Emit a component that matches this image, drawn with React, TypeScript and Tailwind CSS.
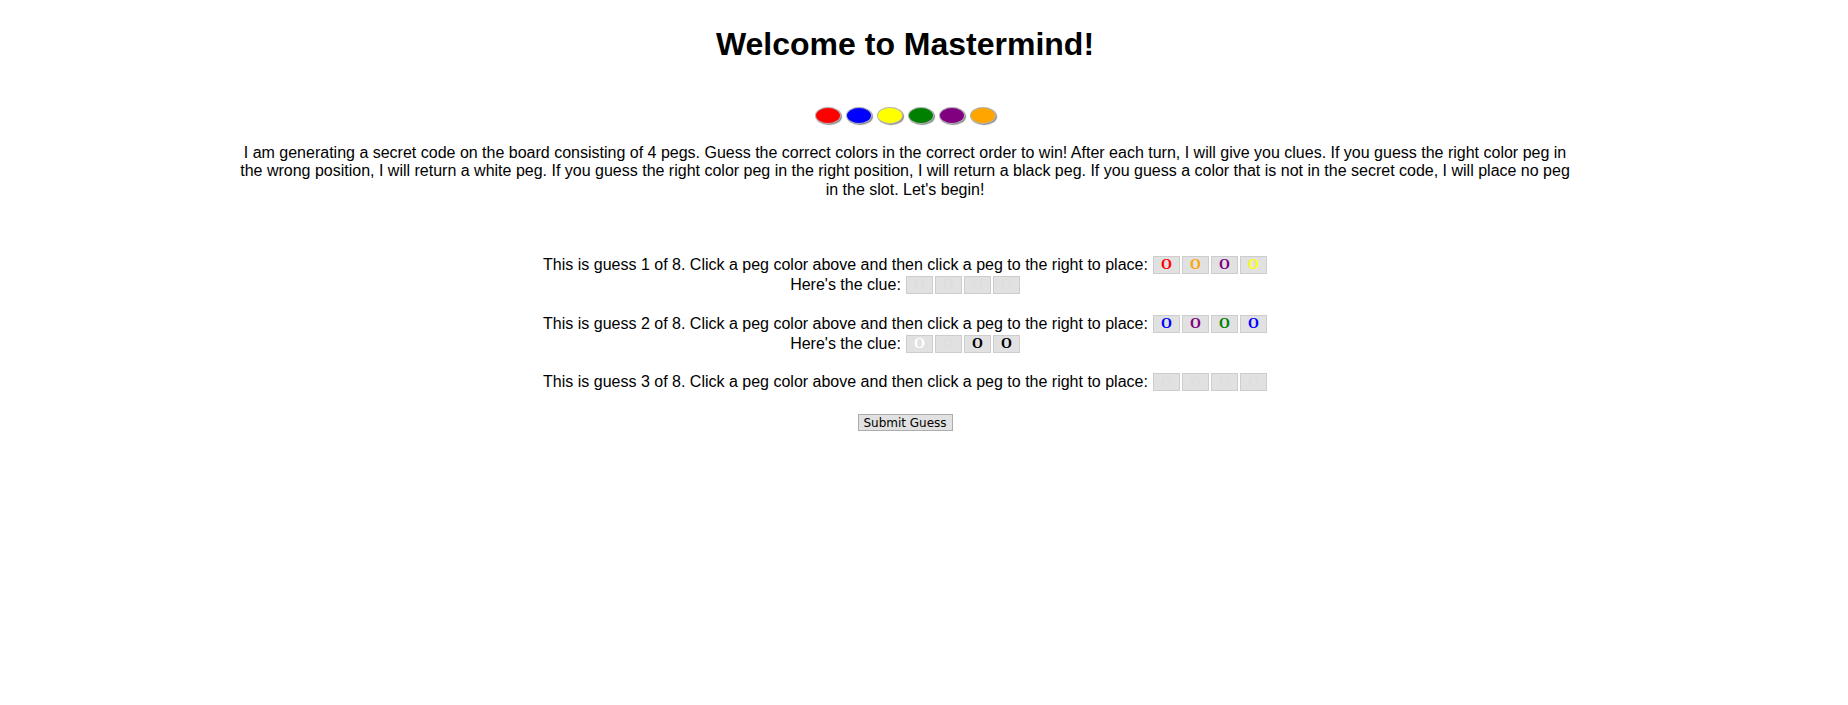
import React from "react";

const paletteColors = ["#ff0000", "#0000ff", "#ffff00", "#008000", "#800080", "#ffa500"];

function Slot({ color }: { color: string }) {
  return (
    <span
      className="flex h-[18px] w-[27px] items-center justify-center border border-[#cdcdcd] bg-[#e1e1e1] text-[14px] font-bold leading-none"
      style={{ color, fontFamily: '"Liberation Serif", serif' }}
    >
      O
    </span>
  );
}

function Slots({ colors }: { colors: string[] }) {
  return (
    <span className="ml-[5px] flex gap-[2px]">
      {colors.map((c, i) => (
        <Slot key={i} color={c} />
      ))}
    </span>
  );
}

const EMPTY = "#dedede";

export default function App() {
  return (
    <div
      className="w-[1810px] bg-white pb-[200px] text-center text-[16px] text-black"
      style={{ fontFamily: '"Liberation Sans", Arial, sans-serif' }}
    >
      <h1 className="pt-[26px] text-[32px] font-bold leading-[37px]">Welcome to Mastermind!</h1>

      <div className="mt-[44px] flex justify-center gap-[5px]">
        {paletteColors.map((c) => (
          <span
            key={c}
            className="h-[17px] w-[26px] rounded-[50%] border border-[#b5b5b5] shadow-[1px_1px_1px_#8a8a8a]"
            style={{ backgroundColor: c }}
          />
        ))}
      </div>

      <p className="mx-auto mt-[20px] w-[1344px] leading-[18.4px]">
        I am generating a secret code on the board consisting of 4 pegs. Guess the correct colors in the correct order to win! After each turn, I will give you clues. If you guess the right color peg in the wrong position, I will return a white peg. If you guess the right color peg in the right position, I will return a black peg. If you guess a color that is not in the secret code, I will place no peg in the slot. Let's begin!
      </p>

      <div className="mt-[56px] flex flex-col">
        <div className="flex h-[20px] items-center justify-center">
          <span>This is guess 1 of 8. Click a peg color above and then click a peg to the right to place:</span>
          <Slots colors={["#ff0000", "#ffa500", "#800080", "#ffff00"]} />
        </div>
        <div className="flex h-[20px] items-center justify-center">
          <span>Here's the clue:</span>
          <Slots colors={[EMPTY, EMPTY, EMPTY, EMPTY]} />
        </div>

        <div className="mt-[18.5px] flex h-[20px] items-center justify-center">
          <span>This is guess 2 of 8. Click a peg color above and then click a peg to the right to place:</span>
          <Slots colors={["#0000ff", "#800080", "#008000", "#0000ff"]} />
        </div>
        <div className="flex h-[20px] items-center justify-center">
          <span>Here's the clue:</span>
          <Slots colors={["#ffffff", EMPTY, "#000000", "#000000"]} />
        </div>

        <div className="mt-[18.5px] flex h-[20px] items-center justify-center">
          <span>This is guess 3 of 8. Click a peg color above and then click a peg to the right to place:</span>
          <Slots colors={[EMPTY, EMPTY, EMPTY, EMPTY]} />
        </div>
      </div>

      <div className="mt-[22px] flex justify-center">
        <button
          className="h-[17px] w-[95px] border border-[#adadad] bg-[#e1e1e1] text-[12px] leading-none text-black"
          style={{ fontFamily: '"DejaVu Sans", Tahoma, sans-serif' }}
        >
          Submit Guess
        </button>
      </div>
    </div>
  );
}
